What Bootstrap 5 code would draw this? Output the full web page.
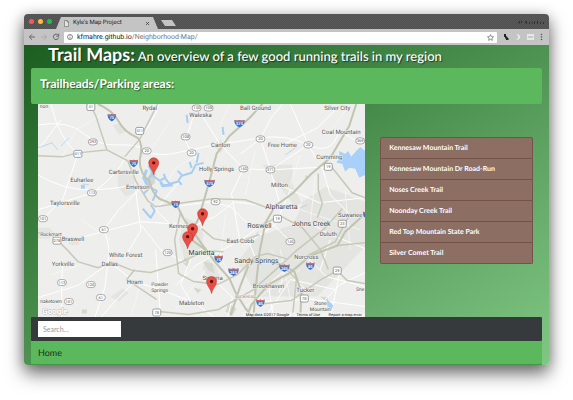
<!DOCTYPE html>
<html lang="en">
<head>
<meta charset="utf-8">
<meta name="viewport" content="width=device-width, initial-scale=1">
<title>Kyle's Map Project</title>
<link href="https://cdn.jsdelivr.net/npm/bootstrap@5.3.0/dist/css/bootstrap.min.css" rel="stylesheet">
<style>
body{font-family:Lato,sans-serif;background:#fff;padding:14px 24px 34px;text-rendering:geometricPrecision}
.browser{border-radius:4px;overflow:hidden;box-shadow:0 9px 18px rgba(0,0,0,.5),0 2px 14px rgba(0,0,0,.25)}
.chrome-text{font-family:Roboto,sans-serif;font-size:7px;line-height:10px;color:#222}
.tabstrip{height:15px;background:repeating-conic-gradient(#505050 0 25%,#5a5a5a 0 50%) 0 0/2px 2px;padding-left:5px}
.lights{gap:4px}
.light{width:5px;height:5px;border-radius:50%}
.red{background:#fc5753}.yellow{background:#fdbc40}.green{background:#19c24f}
.tab-page{font-size:6px;width:104px;height:12px;background:#c4c4c4;clip-path:polygon(5px 0,97px 0,102px 100%,0 100%);padding:0 10px 0 8px;margin-left:4px}
.tab-new{width:15px;height:6px;background:#c4c4c4;border:0;padding:0;clip-path:polygon(0 0,11px 0,100% 100%,4px 100%);margin:0 0 3px 1px}
.toolbar{height:16px;background:#c5c4c5;padding:0 4px}
.toolbar button{border:0;background:none;padding:0;line-height:0}
.address{height:11px;background:#fff;border-radius:1px;padding:0 3px}
.address .path{color:#777}
.site{background:linear-gradient(to bottom right,#1b5e20,#81c784);padding:0 7px}
.headline{font-size:13px;line-height:23px;font-weight:500;color:#fff;text-shadow:1px 1px 1px rgba(0,0,0,.55);padding-left:17px;white-space:nowrap}
.headline strong{font-size:18px;line-height:18px}
.banner{background:#5cb85c;border-radius:2px;height:36px;padding:7px 9px}
.banner h2{font-size:12px;line-height:18px;font-weight:700;color:#fff;text-shadow:1px 1px 1px rgba(0,0,0,.5)}
.map-col{flex:0 0 65.4%;padding-left:7px}
.map-col svg{display:block;width:100%}
.trails{flex:1;padding:0 9px 20px 15px}
.trails .list-group{border-radius:2px;--bs-list-group-bg:#8d6e63;--bs-list-group-border-color:#755248}
.trails .list-group-item{font-size:7px;line-height:10px;font-weight:700;color:#fff;padding:5px 8px;border-color:#755248}
.searchbar{background:#373a3c;height:24px;padding:0 7px;border-radius:1px}
.searchbar input{width:83px;height:16px;font-size:7px;border:0;border-radius:0;padding:0 5px}
.searchbar input::placeholder{color:#999}
.home{background:#5cb85c;color:#1c301c;font-size:9px;line-height:23px;height:24px;padding-left:7px;border-bottom:1px solid #45944a}
.home a{color:inherit;text-decoration:none}
svg text{font-family:Roboto,sans-serif;text-anchor:middle}
.towns{font-size:6px;fill:#555;stroke:#f5f5f3;stroke-width:1px;paint-order:stroke}
.towns .city{font-size:7px;fill:#444}
.towns .big{font-size:7px;fill:#333}
.towns .tight{font-size:5px}
.towns .district{font-size:4px;fill:#a77f59}
.nums{font-size:4px;fill:#555}
.nums .w{fill:#fff;font-weight:700}
.credits{font-size:4px;fill:#222}
svg .logo{font:700 8px Roboto,sans-serif;fill:#fff;stroke:#bbb;stroke-width:1px;paint-order:stroke}
</style>
<script src="https://cdn.jsdelivr.net/npm/bootstrap@5.3.0/dist/js/bootstrap.bundle.min.js"></script>
</head>
<body>
<div class="browser">
  <div class="tabstrip chrome-text d-flex align-items-end">
    <div class="lights d-flex align-self-center"><span class="light red"></span><span class="light yellow"></span><span class="light green"></span></div>
    <div class="tab-page d-flex align-items-center">
      <svg width="5" height="7" viewBox="0 0 5 7" fill="#e4e4e4" stroke="#666" stroke-width=".6"><path d="M.5.5h2.500l1.500 1.500v4.500h-4zM3 .5v1.500h1.500"/></svg>
      <span class="ms-1 flex-grow-1">Kyle's Map Project</span>
      <svg width="5" height="5" viewBox="0 0 5 5" stroke="#444" stroke-width=".8"><path d="M1 1l3 3M4 1l-3 3"/></svg>
    </div>
    <button class="tab-new" aria-label="New tab"></button>
    <svg class="ms-auto me-1 align-self-center" width="28" height="6" viewBox="0 0 28 6" fill="#30303a"><path d="M1 3l2-1v3zM4 2h1v2h-1zM8 2h2v3h-1zM12 3h1v2h-1zM14 1l2 4h-1zM17 2h1v3h-1zM20 2h1v3h-1zM23 3h1v2h-1zM26 3h1v2h-1z"/></svg>
  </div>
  <div class="toolbar chrome-text d-flex align-items-center">
    <button aria-label="Back"><svg width="8" height="8" viewBox="0 0 8 8" fill="none" stroke="#666"><path d="M7 4H1.500M4 1.300L1.300 4 4 6.700"/></svg></button>
    <button class="ms-1" aria-label="Forward"><svg width="8" height="8" viewBox="0 0 8 8" fill="none" stroke="#aaa"><path d="M1 4h5.500M4 1.300L6.700 4 4 6.700"/></svg></button>
    <button class="ms-1" aria-label="Reload"><svg width="8" height="8" viewBox="0 0 8 8" fill="none" stroke="#666"><path d="M6.300 2.300A2.700 2.700 0 1 0 6.700 4.500M6.700 .8v2.400H4.300"/></svg></button>
    <div class="address d-flex align-items-center flex-grow-1 ms-1">
      <svg width="6" height="6" viewBox="0 0 6 6" fill="none" stroke="#555" stroke-width=".7"><circle cx="3" cy="3" r="2.500"/><path d="M3 2.700v2M3 1.300v.7"/></svg>
      <span class="flex-grow-1 ps-1">kfmahre.github.io<span class="path">/Neighborhood-Map/</span></span>
      <svg width="7" height="7" viewBox="0 0 8 8" fill="none" stroke="#666" stroke-width=".8"><path d="M4 .7l1 2.200 2.400.3-1.800 1.600.5 2.500L4 6l-2.100 1.300.5-2.500L.6 3.200 3 2.900z"/></svg>
    </div>
    <svg class="ms-1" width="44" height="10" viewBox="0 0 44 10"><path d="M3 2h2v2l1.500 1v1h1v2H5V6.500H4V5H3z" fill="#222"/><path d="M15 2c2 0 4 1 4 3s-2 3-4 3c3-2 3-4 0-6z" fill="#eee"/><path d="M26 2h7v6h-7z" fill="#e8e8e8"/><path d="M27 5h5" stroke="#aaa"/><g fill="#555"><circle cx="40.500" cy="2.500" r=".8"/><circle cx="40.500" cy="5" r=".8"/><circle cx="40.500" cy="7.500" r=".8"/></g></svg>
  </div>
  <main class="site">
    <h1 class="headline m-0"><strong>Trail Maps:</strong> An overview of a few good running trails in my region</h1>
    <section class="banner"><h2 class="m-0">Trailheads/Parking areas:</h2></section>
    <div class="d-flex align-items-center">
      <div class="map-col">
        <svg viewBox="37 104 328 214" role="img" aria-label="Map of trailheads">
          <defs>
            <g id="inter"><path d="M-4-3q2 1 4 0 2 1 4 0 1 5-4 7.500-5-2.500-4-7.500z" fill="#3c73c8"/><path d="M-4-3q2 1 4 0 2 1 4 0v2h-8z" fill="#d8665c"/></g>
            <g id="inter3"><path d="M-5-3q2.500 1 5 0 2.500 1 5 0 1 5-5 7.500-6-2.500-5-7.500z" fill="#3c73c8"/><path d="M-5-3q2.500 1 5 0 2.500 1 5 0v2h-10z" fill="#d8665c"/></g>
            <rect id="us" x="-4" y="-3.500" width="8" height="7" rx="1.500" fill="#fff" stroke="#777" stroke-width=".7"/>
            <rect id="st" x="-4.500" y="-3" width="9" height="6" rx="3" fill="#fff" stroke="#888" stroke-width=".7"/>
            <g id="pin"><path d="M0 12C-.6 7-5 4.500-5 0a5 5 0 0 1 10 0C5 4.500.6 7 0 12z" fill="#ea4f45" stroke="#b93a32" stroke-width=".6"/><circle r="1.700" fill="#5c1410"/></g>
          </defs>
          <path d="M37 104h328v214H37z" fill="#eeeeec"/>
          <g fill="#e4e4e1"><path d="M262 165h30v20l10 20-10 20-35 12-20 25 20 35h60l48-50v-45l-40-15-30 20zM112 125l8-2 6 8-8 4zM117 175l8-5 8 8 2 14-10 5-8-10zM68 240h10v5H68zM185 218l12 5 6 12-5 20-14 5-6-20zM205 258l10 8 5 14-8 4-10-15zM110 297l12-8 6 4-10 9zM212 145l8-5 5 7-5 6zM37 228h12l4 5-5 6H37z"/></g>
          <g fill="#d6d8ce"><path d="M150 172l5 2-1 10-7 4-3-6zM184 258l5 3-2 7-5-5zM202 262l10 2 2 10-6-3zM305 175l4 3-4 2zM81 310h5v4h-5zM320 297l8 1-2 5zM193 288l8 2-4 4zM228 304l8 5-4 7-7-4z"/></g>
          <g fill="none" stroke="#fff" stroke-width="1"><path d="M37 125q30-5 45 8t35 12 29 6 35 1 40-8 39-6 48 7 30-12M158 104q-5 18-18 32l-16 22q-5 15-32 35l-55 17M37 175q25 15 50 15t45-5M42 219l20-20 15-45M103 230l15-20 20-20M103 230q8 20 4 33l-3 25-10 30M62 263q-2 20-1 55M72 240l38-10 30-8 45 3M37 298l40-12 32-23M109 263l25 19 25 8 35 13 20 15M134 282l-20 20-14 16M196 104q-6 25-12 35l7 14 10 15M201 115l19 30 23 24-12 25 8 45M243 169l27 1 58-3M260 139l10 31 10 36M282 104l-12 15-10 20-20 15M290 104l18 41 8 14M308 145l-38 25M337 108l-20 20-35 17M341 132l15 9M279 185l40 18 45-5M264 206l-30-4-20 15-20 9M250 227l-20-20-20-5-30 4M240 241l-20 10-25 15-20 20M190 260l-10 25 11 18M240 241l20-15M256 261l-8-20M290 242l-20-20-10 4M311 224l17 10 37 15M306 257l20 20 39 10M305 290l-20-20-18 16M320 305l20-20 25-12M212 278l20 20-5 20M245 296l30 8 30-5 60 8M268 286l5 32M284 268l-5 25M330 240l-10 30M350 215l-20-20-8-27M290 190l-15 35-30 20M155 250l5 68M140 225l20 25 25 13M125 256l15-25-5-40M50 104q8 35 27 50M60 120l-23 30M180 180l-25 30 20 20M330 318l10-47M265 318l25-38 45 10"/></g>
          <g fill="none" stroke="#f8f8f7" stroke-width=".8"><path d="M100 115l-25 15-15 30M170 120l-20 31M230 104l-10 20 5 20M165 185l10-17 26-15M300 155l-10 30M315 175l-5 49M345 190l5 60M225 215l-5 40 15 40M270 250l40 50M240 310l60-40M175 310l30-40M130 318l10-35M80 220l30 20M50 275l30-10M255 150l-10 45M350 104l-18 25M300 210l60 20M290 300l-10-50"/></g>
          <g fill="none" stroke="#a7cdf3" stroke-width="2" stroke-linejoin="round"><path d="M148 166l4 8-4 5 2 9 6 3-4 10M151 175l8 6 5-3 5 6 8-2 4-6 10-3 4-8 8-2M165 179l-2-5M178 181l3 4M181 175l-4-4M191 168l-2-6M196 163l2-10M148 189l-5 5M186 115l1 8M150 205l4 6-4 7-8-9M222 127l1 8"/><path d="M146 170l-3 8 4 8M160 182l2 4 10-1" stroke-width="3"/><path d="M37 148l14-5 6 7M68 138l-8 8M82 184l6 1M300 208l7-3M252 240l6-8M285 155l10-7" stroke-width=".7"/></g>
          <path d="M339 151l6 3 3-3 3 6 5-6 4-4 5 4v24l-6 3-4-9-6-1-4 4-3-8-6-1 3-4zM80 185h4v4h-4zM327 300l6 6-2 5-5-6z" fill="#a9d0f8"/>
          <g fill="none" stroke="#c7c9b8" stroke-width="1.500"><path d="M89 104l6 12 11 34-29 3-16 4-24-1M106 150l21 11 8 20 12 20 8 6 20-3 37-5 33 1 22 8M157 104l-18 35-15 18M37 233l16 4 14 14 10 11 20 6 15-5 20 8 18 2 25-8 30-14 18 1M134 270l-8 10 18 12 12 8M180 212l-6 28 4 34 15 8 24 3 20-10 18-18 12-3 19 5M201 229l12 10 22 4 24-8M158 312l30 3 30-5 35-20 28-25 15-14 28-22 18-20M260 226l20-10 22 12 18 22 8 20M335 246l30-3M305 257l30-15 15-28M284 268l12 12-4 38M337 271l-18 10-28 20-34 4M337 271l10 10 18 3M318 174v16l4 14-5 14M332 168l20 25 13 5"/></g>
          <g fill="none" stroke="#c0c4b0" stroke-width="2"><path d="M97 104q14 6 20 16 6 12 20 18 5 6 3 17-4 15 9 27 4 17 15 19l13 6 6 12 18 25 14 19 14 16 6 14 10 16 10 12v13M356 104l-7 22-19 32-20 17-17 18-18 13-10 17-6 30-4 38-4 54M200 212l9-31 7-27 13-18 20-18 13-14M365 214l-20 18-8 14-27 10-20 17-22 12-17 20-5 13M201 212l-8 17M188 238l18 13M246 264l15-4 20 5 13 7 7 20-1 26M248 266l-8 20-10 30"/></g>
          <g><use href="#us" x="90" y="107"/><use href="#us" x="139" y="131"/><use href="#us" x="77" y="154"/><use href="#us" x="328" y="167"/><use href="#us" x="56" y="241"/><use href="#us" x="156" y="313"/><use href="#us" x="277" y="219"/><use href="#us" x="342" y="224"/><use href="#us" x="337" y="271"/><use href="#us" x="304" y="299"/>
          <use href="#st" x="92" y="142"/><use href="#st" x="91" y="193"/><use href="#st" x="196" y="108"/><use href="#st" x="208" y="108"/><use href="#st" x="185" y="137"/><use href="#st" x="146" y="151"/><use href="#st" x="191" y="153"/><use href="#st" x="243" y="169"/><use href="#st" x="215" y="202"/><use href="#st" x="260" y="139"/><use href="#st" x="308" y="145"/><use href="#st" x="270" y="170"/><use href="#st" x="360" y="141"/><use href="#st" x="42" y="219"/><use href="#st" x="103" y="230"/><use href="#st" x="61" y="283"/><use href="#st" x="90" y="285"/><use href="#st" x="68" y="302"/><use href="#st" x="100" y="298"/><use href="#st" x="167" y="253"/><use href="#st" x="290" y="242"/>
          <use href="#inter" x="111" y="117"/><use href="#inter" x="133" y="163"/><use href="#inter" x="175" y="204"/><use href="#inter" x="218" y="259"/><use href="#inter" x="310" y="266"/><use href="#inter" x="260" y="303"/><use href="#inter" x="367" y="215"/><use href="#inter3" x="239" y="123"/><use href="#inter3" x="209" y="183"/><use href="#inter3" x="233" y="272"/><use href="#inter3" x="284" y="268"/></g>
          <g class="nums"><text x="90" y="108.500">41</text><text x="139" y="132.500">411</text><text x="77" y="155.500">411</text><text x="328" y="168.500">19</text><text x="56" y="242.500">278</text><text x="156" y="314.500">78</text><text x="277" y="220.500">19</text><text x="342" y="225.500">23</text><text x="337" y="272.500">29</text><text x="304" y="300.500">78</text><text x="92" y="143.500">293</text><text x="91" y="194.500">113</text><text x="196" y="109.500">140</text><text x="208" y="109.500">108</text><text x="185" y="138.500">108</text><text x="146" y="152.500">20</text><text x="191" y="154.500">20</text><text x="243" y="170.500">140</text><text x="215" y="203.500">92</text><text x="260" y="140.500">20</text><text x="308" y="146.500">20</text><text x="270" y="171.500">371</text><text x="360" y="142.500">369</text><text x="42" y="220.500">101</text><text x="103" y="231.500">61</text><text x="61" y="284.500">113</text><text x="90" y="286.500">120</text><text x="68" y="303.500">101</text><text x="100" y="299.500">61</text><text x="167" y="254.500">120</text><text x="290" y="243.500">140</text>
          <text class="w" x="111" y="119">75</text><text class="w" x="133" y="165">75</text><text class="w" x="175" y="206">75</text><text class="w" x="218" y="261">75</text><text class="w" x="310" y="268">85</text><text class="w" x="260" y="305">85</text><text class="w" x="239" y="125">575</text><text class="w" x="209" y="185">575</text><text class="w" x="233" y="274">285</text><text class="w" x="284" y="270">285</text></g>
          <g class="towns"><text x="43" y="108" class="tight">non</text><text x="149" y="110">Rydal</text><text x="200" y="117">Waleska</text><text x="255" y="110">Ball Ground</text><text x="337" y="110">Silver City</text><text x="341" y="134">Coal Mountain</text><text x="282" y="147">Free Home</text><text x="220" y="147">Canton</text><text x="329" y="159">Cumming</text><text x="123" y="174">Cartersville</text><text x="81" y="182">Euharlee</text><text x="137" y="189">Emerson</text><text x="64" y="205">Taylorsville</text><text x="216" y="171">Holly Springs</text><text x="279" y="187">Milton</text><text class="city" x="281" y="209">Alpharetta</text><text class="city" x="259" y="228">Roswell</text><text class="city" x="311" y="226">Johns Creek</text><text x="350" y="217">Suwanee</text><text x="328" y="236">Duluth</text><text x="50" y="236" class="tight">Rockmart</text><text x="72" y="241">Braswell</text><text x="62" y="266">Yorkville</text><text x="125" y="257">White Forest</text><text x="109" y="266">Dallas</text><text x="134" y="284">Hiram</text><text x="50" y="303" class="tight">naketown</text><text x="182" y="228">Kennesaw</text><text class="big" x="201" y="255">Marietta</text><text x="240" y="243">East Cobb</text><text class="city" x="256" y="263">Sandy Springs</text><text x="212" y="280">Smyrna</text><text class="tight" x="159" y="286">Powder</text><text class="tight" x="159" y="292">Springs</text><text x="191" y="305">Mableton</text><text x="306" y="259">Norcross</text><text x="268" y="288">Brookhaven</text><text x="305" y="292">Tucker</text><text class="tight" x="320" y="306">Stone</text><text class="tight" x="320" y="312">Mountain</text><text class="tight" x="360" y="291">Sne</text><text class="district" x="245" y="298">BUCKHEAD</text></g>
          <use href="#pin" x="153" y="163"/><use href="#pin" x="202" y="214"/><use href="#pin" x="192" y="229"/><use href="#pin" x="187" y="237"/><use href="#pin" x="211" y="282"/>
          <path d="M242 313h123v5H242z" fill="#f5f5f5" opacity=".75"/>
          <g class="credits"><text x="267" y="317">Map data ©2017 Google</text><text x="308" y="317">Terms of Use</text><text x="345" y="317">Report a map error</text></g>
          <text x="54" y="315" class="logo">Google</text>
        </svg>
      </div>
      <nav class="trails" aria-label="Trails">
        <div class="list-group">
          <a href="#" class="list-group-item">Kennesaw Mountain Trail</a>
          <a href="#" class="list-group-item">Kennesaw Mountain Dr Road-Run</a>
          <a href="#" class="list-group-item">Noses Creek Trail</a>
          <a href="#" class="list-group-item">Noonday Creek Trail</a>
          <a href="#" class="list-group-item">Red Top Mountain State Park</a>
          <a href="#" class="list-group-item">Silver Comet Trail</a>
        </div>
      </nav>
    </div>
    <form class="searchbar d-flex align-items-center"><input type="search" placeholder="Search..." aria-label="Search"></form>
    <div class="home"><a href="#">Home</a></div>
  </main>
</div>
</body>
</html>
